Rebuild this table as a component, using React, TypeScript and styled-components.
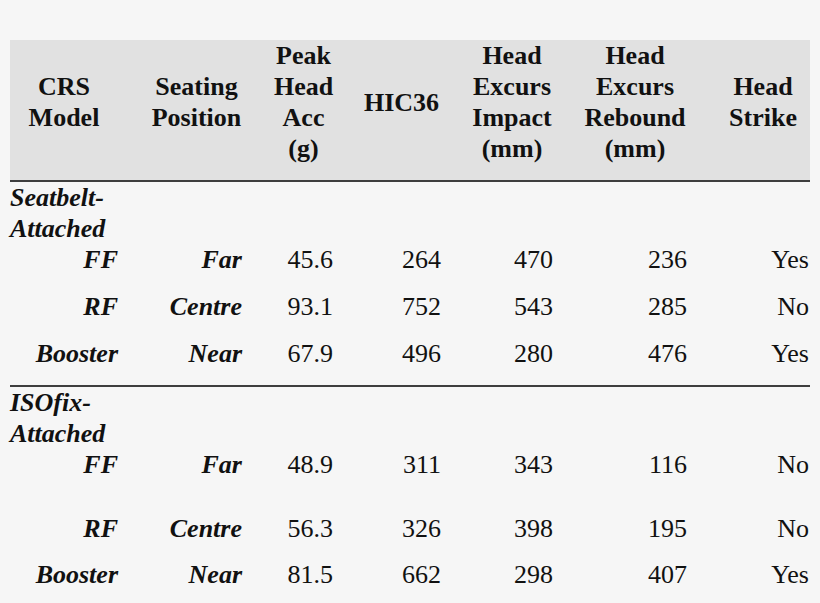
import React from 'react';
import styled, { createGlobalStyle, css } from 'styled-components';

const GlobalStyle = createGlobalStyle`
  html, body {
    margin: 0;
    padding: 0;
    background: #f6f6f6;
  }
`;

// column widths and right paddings measured from the table
const COLS = '141px 123px 88px 109px 112px 134px 93px';
const PADS = [33, 32, 29, 30, 30, 30, 1];

const columnPadding = css`
  ${PADS.map(
    (p, i) => css`
      & > :nth-child(${i + 1}) {
        padding-right: ${p}px;
      }
    `,
  )}
`;

const Page = styled.div`
  padding: 40px 10px 0;
  width: 800px;
  font-family: "Liberation Serif", "Times New Roman", serif;
  color: #111;
`;

const HeaderRow = styled.div`
  display: grid;
  grid-template-columns: ${COLS};
  align-items: center;
  background: #e1e1e1;
  padding-bottom: 16px;
  border-bottom: 2px solid #3e3e3e;
  ${columnPadding}
`;

const HeaderCell = styled.div`
  font-size: 26px;
  line-height: 31px;
  font-weight: bold;
  text-align: center;
`;

const Section = styled.div<{ $divider?: boolean }>`
  ${(p) => p.$divider && 'border-bottom: 2px solid #3e3e3e;'}
`;

const GroupLabel = styled.div`
  width: 141px;
  font-size: 26px;
  line-height: 31px;
  font-weight: bold;
  font-style: italic;
`;

const DataRow = styled.div<{ $after: number }>`
  display: grid;
  grid-template-columns: ${COLS};
  padding-bottom: ${(p) => p.$after}px;
  ${columnPadding}
`;

const Cell = styled.div<{ $emph?: boolean }>`
  font-size: 26px;
  line-height: 31px;
  text-align: right;
  white-space: nowrap;
  font-weight: ${(p) => (p.$emph ? 'bold' : 'normal')};
  font-style: ${(p) => (p.$emph ? 'italic' : 'normal')};
`;

const headers = [
  ['CRS', 'Model'],
  ['Seating', 'Position'],
  ['Peak', 'Head', 'Acc', '(g)'],
  ['HIC36'],
  ['Head', 'Excurs', 'Impact', '(mm)'],
  ['Head', 'Excurs', 'Rebound', '(mm)'],
  ['Head', 'Strike'],
];

type Row = { cells: string[]; after: number };

const groups: { label: string; divider: boolean; rows: Row[] }[] = [
  {
    label: 'Seatbelt-Attached',
    divider: true,
    rows: [
      { cells: ['FF', 'Far', '45.6', '264', '470', '236', 'Yes'], after: 16 },
      { cells: ['RF', 'Centre', '93.1', '752', '543', '285', 'No'], after: 16 },
      { cells: ['Booster', 'Near', '67.9', '496', '280', '476', 'Yes'], after: 16 },
    ],
  },
  {
    label: 'ISOfix-Attached',
    divider: false,
    rows: [
      { cells: ['FF', 'Far', '48.9', '311', '343', '116', 'No'], after: 33 },
      { cells: ['RF', 'Centre', '56.3', '326', '398', '195', 'No'], after: 15 },
      { cells: ['Booster', 'Near', '81.5', '662', '298', '407', 'Yes'], after: 16 },
    ],
  },
];

const App = () => {
  return (
    <>
      <GlobalStyle />
      <Page>
        <HeaderRow>
          {headers.map((lines, i) => (
            <HeaderCell key={i}>
              {lines.map((l, j) => (
                <React.Fragment key={j}>
                  {j > 0 && <br />}
                  {l}
                </React.Fragment>
              ))}
            </HeaderCell>
          ))}
        </HeaderRow>
        {groups.map((g) => (
          <Section key={g.label} $divider={g.divider}>
            <GroupLabel>{g.label}</GroupLabel>
            {g.rows.map((r, i) => (
              <DataRow key={i} $after={r.after}>
                {r.cells.map((c, j) => (
                  <Cell key={j} $emph={j < 2}>
                    {c}
                  </Cell>
                ))}
              </DataRow>
            ))}
          </Section>
        ))}
      </Page>
    </>
  );
};

export default App;
